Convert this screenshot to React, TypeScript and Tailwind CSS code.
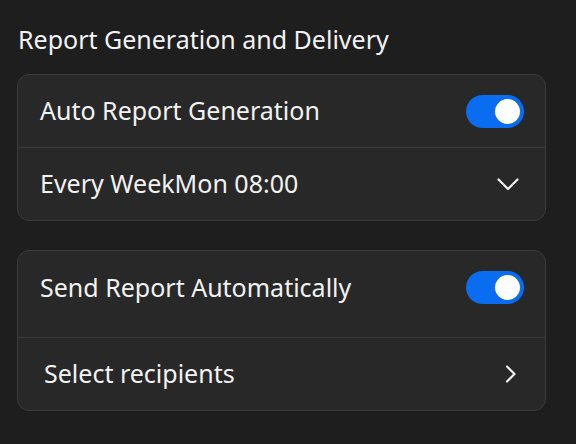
function Toggle() {
  return (
    <div className="flex h-[33px] w-[58px] items-center justify-end rounded-full bg-[#0a6cf0] px-[4px]">
      <div className="h-[25px] w-[25px] rounded-full bg-white" />
    </div>
  );
}

export default function App() {
  return (
    <div
      className="min-h-[444px] w-[576px] bg-[#1e1e1e] pl-[17px] pr-[30px] pt-[24px] text-[#f2f2f2]"
      style={{ fontFamily: '"Noto Sans", "Open Sans", sans-serif' }}
    >
      <h2 className="pl-[1px] text-[25px] leading-[30px]">Report Generation and Delivery</h2>

      <div className="mt-[20px] overflow-hidden rounded-[12px] border border-[#3a3a3a] bg-[#282828]">
        <div className="flex h-[72px] items-center justify-between pl-[22px] pr-[21px]">
          <span className="text-[25px]">Auto Report Generation</span>
          <Toggle />
        </div>
        <div className="flex h-[73px] items-center justify-between border-t border-[#3a3a3a] pl-[22px] pr-[26px]">
          <span className="text-[25px]">Every WeekMon 08:00</span>
          <svg width="22" height="13" viewBox="0 0 22 13" fill="none" stroke="currentColor" strokeWidth="2.2" strokeLinecap="round" strokeLinejoin="round">
            <path d="M1.5 1.5 11 11 20.5 1.5" />
          </svg>
        </div>
      </div>

      <div className="mt-[29px] overflow-hidden rounded-[12px] border border-[#3a3a3a] bg-[#282828]">
        <div className="flex items-start justify-between pb-[33px] pl-[22px] pr-[21px] pt-[20px]">
          <span className="text-[25px] leading-[33px]">Send Report Automatically</span>
          <Toggle />
        </div>
        <div className="flex h-[73px] items-center justify-between border-t border-[#3a3a3a] pl-[26px] pr-[28px]">
          <span className="text-[25px]">Select recipients</span>
          <svg width="12" height="18" viewBox="0 0 12 18" fill="none" stroke="currentColor" strokeWidth="2.2" strokeLinecap="round" strokeLinejoin="round">
            <path d="M2 1.5 9.5 9 2 16.5" />
          </svg>
        </div>
      </div>
    </div>
  );
}
